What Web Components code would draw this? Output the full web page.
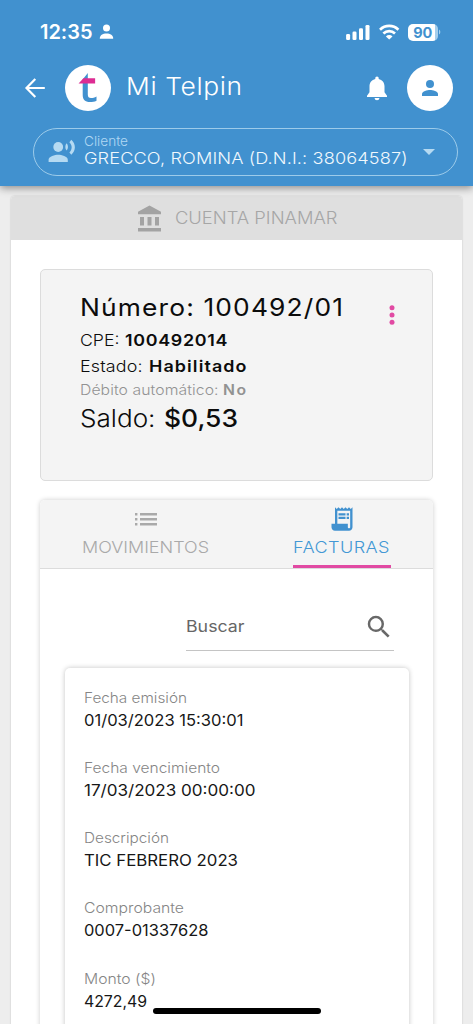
<!DOCTYPE html>
<html lang="es">
<head>
<meta charset="utf-8">
<title>Mi Telpin</title>
<style>
html,body{margin:0;height:1024px;overflow:hidden;background:#ededed}
body{font-family:Inter,"Open Sans",sans-serif;color:#111}
</style>
</head>
<body>
<telpin-app></telpin-app>
<script>
function define(name, html, setup){
  customElements.define(name, class extends HTMLElement{
    connectedCallback(){
      if(this.shadowRoot) return;
      this.attachShadow({mode:'open'}).innerHTML = html;
      if(setup) setup(this, this.shadowRoot);
    }
  });
}

/* One line of text, widened up to 10% and then tracked to the width in "w". */
define('tracked-text', `<style>
:host{display:block;white-space:pre;flex:none}
span{display:inline-block;vertical-align:top;transform-origin:0 50%}
</style><span></span>`, (el, root) => {
  const s = root.querySelector('span');
  const t = el.getAttribute('text');
  s.textContent = t;
  const w = parseFloat(el.getAttribute('w'));
  const ink = t.length > 4 ? w - 1.5 : w - .5;
  const n = s.getBoundingClientRect().width;
  const k = Math.max(1, Math.min(ink / n, 1.1));
  s.style.letterSpacing = ((ink / k - n) / (t.length - 1)).toFixed(3) + 'px';
  s.style.transform = 'scaleX(' + k.toFixed(4) + ')';
  el.style.width = w + 'px';
});

define('status-bar', `<style>
:host{display:flex;height:62px;box-sizing:border-box;padding:2px 32px 0 40px;align-items:center;color:#fff}
.time{font-size:20px;font-weight:600;line-height:24px}
.person{margin-left:5px}
.sig{margin-left:auto}
.wifi{margin-left:8px}
.bat{margin-left:8px;width:30px;height:17px;border-radius:5px;background:linear-gradient(90deg,#fff 0 27px,#a5cfec 27px);color:#4191cf;font-size:14.500px;font-weight:700;line-height:17.500px;display:flex;justify-content:center}
.cap{margin-left:1px}
</style>
<tracked-text class="time" w="54" text="12:35"></tracked-text>
<svg class="person" width="16" height="16" viewBox="0 0 16 16" fill="#fff"><circle cx="7.500" cy="4" r="3.500"/><path d="M.8 14.700c-.2-3.300 3-5.200 6.700-5.200s6.900 1.900 6.700 5.200z"/></svg>
<svg class="sig" width="25" height="17" viewBox="0 0 25 17" fill="#fff"><rect x=".1" y="10" width="4" height="6" rx="1.300"/><rect x="6.500" y="7.500" width="4" height="8.500" rx="1.300"/><rect x="13" y="4.300" width="4" height="11.700" rx="1.300"/><rect x="19.500" y="1" width="4" height="15" rx="1.300"/></svg>
<svg class="wifi" width="21" height="17" viewBox="0 0 21 17" fill="none" stroke="#fff" stroke-width="2.700"><path d="M1 5.700a13.200 13.200 0 0 1 18.400 0M4.400 9.500a8.400 8.400 0 0 1 11.600 0"/><path d="M10.200 15.500L6.900 12.400a4.700 4.700 0 0 1 6.600 0z" fill="#fff" stroke="none"/></svg>
<div class="bat"><tracked-text w="19.500" text="90"></tracked-text></div>
<svg class="cap" width="2" height="6"><path d="M0 .5a3 3 0 0 1 0 5z" fill="#a5cfec"/></svg>`);

define('app-toolbar', `<style>
:host{display:flex;height:52px;align-items:center;padding:0 20px 0 23px;color:#fff}
.disc{width:46px;height:46px;border-radius:50%;background:#fff;display:flex;align-items:center;justify-content:center}
.logo{margin-left:18px}
.title{margin-left:14.500px;font-size:24px;line-height:30px;font-weight:300;margin-top:-3px}
.bell{margin-left:auto;margin-right:16px}
</style>
<svg width="24" height="24" viewBox="0 0 24 24" fill="none" stroke="#fff" stroke-width="2.200"><path d="M21.800 12H3.800M12.300 3L3.500 12l8.800 9"/></svg>
<div class="disc logo"><svg width="46" height="46" viewBox="0 0 46 46"><path d="M17.700 14.500L22.800 8v21.500c0 2.500 1 3.500 3.200 3.500 1.900 0 3.500-.5 5.500-1.500v4.300c-2 1-4.200 1.300-6.500 1.300-5 0-7.300-2.500-7.300-7z" fill="#4191cf"/><path d="M13.600 18.400l4.800-5.200h11.700v5.200z" fill="#dd2c93"/></svg></div>
<tracked-text class="title" w="117.500" text="Mi Telpin"></tracked-text>
<svg class="bell" width="28" height="28" viewBox="0 0 28 28" fill="#fff"><path d="M14 26.200a2.500 2.500 0 0 0 2.500-2.200h-5a2.500 2.500 0 0 0 2.500 2.200z"/><path d="M14 2.500c-1 0-1.700.8-1.700 1.800v.7C8.800 5.800 6.500 8.700 6.500 12.300v6L4 21.700v1.200h20v-1.200l-2.500-3.400v-6c0-3.600-2.300-6.500-5.800-7.300v-.7c0-1-.7-1.800-1.700-1.800z"/></svg>
<div class="disc"><svg width="16" height="16" viewBox="0 0 16 16" fill="#4191cf"><circle cx="8" cy="4" r="4"/><path d="M0 16v-2c0-2.700 5.300-4 8-4s8 1.300 8 4v2z"/></svg></div>`);

define('client-select', `<style>
:host{display:flex;box-sizing:border-box;width:425.500px;height:48.500px;margin:13.500px 0 0 32.500px;border:1.300px solid #9ccbea;border-radius:25px;align-items:center;padding:0 21px 0 14px}
.txt{margin-left:8.500px;height:47px}
.l{font-size:13.300px;line-height:16px;color:#b0d8f3;margin-top:4.500px;font-weight:350}
.v{font-size:16.500px;line-height:20px;color:#f0f8fd;margin-top:-.500px;font-weight:350}
.arrow{margin-left:auto}
</style>
<svg width="28" height="26" viewBox="0 0 28 26" fill="#b5daf2"><circle cx="10.200" cy="8" r="4.900"/><path d="M.600 23v-2.300c0-3.300 6.400-5 9.600-5s9.600 1.700 9.600 5V23z"/><path d="M18.700 4.300c1.700 2.200 1.700 5 0 7.200l-.9-1.300c-.6-1.600-.6-3 0-4.600zM23.300 .8c4.800 4.300 4.700 10.800 0 15l-1.900-2.400c3-3.200 3-7.100 0-10.200z"/></svg>
<div class="txt"><tracked-text class="l" w="45.500" text="Cliente"></tracked-text><tracked-text class="v" w="325" text="GRECCO, ROMINA (D.N.I.: 38064587)"></tracked-text></div>
<svg class="arrow" width="14" height="8" viewBox="0 0 14 8"><path d="M1 1h12L7 7z" fill="#b5daf2"/></svg>`);

define('app-header', `<style>
:host{display:block;position:relative;height:185.500px;background:#4191cf;box-shadow:0 2px 8px rgba(0,0,0,.42);box-sizing:border-box}
</style><status-bar></status-bar><app-toolbar></app-toolbar><client-select></client-select>`);

define('account-header', `<style>
:host{display:flex;height:44px;background:#dfdfdf;align-items:center;padding-left:125px;color:#a6a6a6;border-radius:4px 4px 0 0}
tracked-text{margin-left:11.500px;font-size:16.700px;line-height:20px;font-weight:350}
</style><svg width="27" height="28" viewBox="0 0 27 28" fill="#a3a3a3"><path d="M13.500 1.500L2 7.800v2.400h23V7.800zM4 13h4v8.500H4zM11.500 13h4v8.500h-4zM19 13h4v8.500h-4zM2 24h23v3.500H2z"/></svg>
<tracked-text w="164" text="CUENTA PINAMAR"></tracked-text>`);

define('balance-card', `<style>
:host{display:flex;box-sizing:border-box;width:393px;height:212px;border:1.500px solid #dcdcdc;border-radius:5px;background:#f4f4f4;margin:29px 0 0 29px;justify-content:space-between;padding:22px 36px 0 39px;color:#0c0c0c}
.row{display:flex;font-size:16.300px}
.gap{margin-left:4.500px}
b,.b{font-weight:600}
.n{font-size:24px;line-height:31px}
.r{line-height:26px}
.d{font-size:14.300px;line-height:21px;color:#929292}
.s{font-size:24px;line-height:38px}
.light{font-weight:350}
svg{margin-top:11px}
</style>
<div>
<div class="row n"><tracked-text w="264.500" text="Número: 100492/01"></tracked-text></div>
<div class="row r" style="margin-top:3.500px"><tracked-text w="40" class="light" text="CPE:"></tracked-text><tracked-text class="b gap" w="104" text="100492014"></tracked-text></div>
<div class="row r"><tracked-text w="64" class="light" text="Estado:"></tracked-text><tracked-text class="b gap" w="99" text="Habilitado"></tracked-text></div>
<div class="row d"><tracked-text w="140" class="light" text="Débito automático:"></tracked-text><tracked-text class="b" style="margin-left:3px" w="23.500" text="No"></tracked-text></div>
<div class="row s"><tracked-text w="77" class="light" text="Saldo:"></tracked-text><tracked-text class="b" style="margin-left:6.500px;font-weight:500" w="75.500" text="$0,53"></tracked-text></div>
</div>
<svg width="8" height="24" viewBox="0 0 8 24" fill="#e14aa3"><circle cx="4" cy="4.800" r="2.500"/><circle cx="4" cy="12" r="2.500"/><circle cx="4" cy="19.300" r="2.500"/></svg>`);

define('tab-strip', `<style>
:host{display:flex;height:68px;background:#f4f4f4;border-bottom:1px solid #dcdcdc;border-radius:5px 5px 0 0;font-size:16.400px;line-height:20px;font-weight:350;padding:0 42px;justify-content:space-between}
.tab{display:flex;flex-direction:column;align-items:center;color:#a9a9a9;box-sizing:border-box;height:68px;padding-top:6px}
.on{color:#4398d5;border-bottom:3px solid #e14aa3}
svg{margin-bottom:3px}
</style>
<div class="tab"><svg width="28" height="28" viewBox="0 0 28 28" fill="#a9a9a9"><path d="M3 7h2.400v2.600H3zM3 12h2.400v2.600H3zM3 17h2.400v2.600H3zM8 7h17v2.600H8zM8 12h17v2.600H8zM8 17h17v2.600H8z"/></svg><tracked-text w="128.500" text="MOVIMIENTOS"></tracked-text></div>
<div class="tab on"><svg style="margin-top:-1px;margin-bottom:4px" width="28" height="28" viewBox="0 0 24 24" fill="#4191cf"><path d="M19.500 3.500L18 2l-1.500 1.500L15 2l-1.500 1.500L12 2l-1.500 1.500L9 2 7.500 3.500 6 2v14H3v3c0 1.660 1.340 3 3 3h12c1.660 0 3-1.340 3-3V2l-1.500 1.500zM19 19c0 .550-.450 1-1 1s-1-.450-1-1v-3H8V5h11v14z"/><path d="M9 7h6v2H9zM16 7h2v2h-2zM9 10h6v2H9zM16 10h2v2h-2z"/></svg><tracked-text w="98" text="FACTURAS"></tracked-text></div>`);

define('search-field', `<style>
:host{display:flex;width:208px;height:49px;margin:33px 0 0 146px;border-bottom:1.500px solid #c4c4c4;box-sizing:border-box;justify-content:space-between;font-size:16.300px;line-height:20px;color:#666;padding:14px 0 0}
tracked-text{margin-left:-.500px}
svg{margin-top:-4px}
</style><tracked-text w="60" text="Buscar"></tracked-text>
<svg width="30" height="30" viewBox="0 0 24 24" fill="#686868"><path d="M15.500 14h-.790l-.280-.270A6.470 6.470 0 0 0 16 9.500 6.500 6.500 0 1 0 9.500 16c1.610 0 3.090-.590 4.230-1.570l.270.280v.790l5 4.990L20.490 19l-4.990-5zm-6 0C7.010 14 5 11.990 5 9.500S7.010 5 9.500 5 14 7.010 14 9.500 11.990 14 9.500 14z"/></svg>`);

define('invoice-field', `<style>
:host{display:block;height:70.300px}
.l{font-size:14.300px;line-height:20px;color:#858585;font-weight:350}
.v{font-size:15.800px;line-height:22px;color:#171717;margin-top:2px}
</style><div class="l"></div><div class="v"></div>`, (el, root) => {
  const add = (sel, text, w) => {
    const t = document.createElement('tracked-text');
    t.setAttribute('text', text); t.setAttribute('w', w);
    root.querySelector(sel).append(t);
  };
  add('.l', el.getAttribute('label'), el.getAttribute('lw'));
  add('.v', el.getAttribute('value'), el.getAttribute('vw'));
});

define('invoice-card', `<style>
:host{display:block;width:344px;height:420px;margin:17px 0 0 24.500px;padding:20px 0 0 19.500px;box-sizing:border-box;border-radius:5px;background:#fff;box-shadow:0 0 5px rgba(0,0,0,.24)}
</style>
<invoice-field label="Fecha emisión" lw="104.500" value="01/03/2023 15:30:01" vw="161"></invoice-field>
<invoice-field label="Fecha vencimiento" lw="137.500" value="17/03/2023 00:00:00" vw="173"></invoice-field>
<invoice-field label="Descripción" lw="86.500" value="TIC FEBRERO 2023" vw="155.500"></invoice-field>
<invoice-field label="Comprobante" lw="101.500" value="0007-01337628" vw="126"></invoice-field>
<invoice-field label="Monto ($)" lw="73.500" value="4272,49" vw="64.500"></invoice-field>`);

define('movements-panel', `<style>
:host{display:block;width:393px;height:620px;margin:18.500px 0 0 29px;border-radius:5px;background:#fff;box-shadow:0 0 5px rgba(0,0,0,.2)}
:host::before{content:"";display:table}
</style><tab-strip></tab-strip><search-field></search-field><invoice-card></invoice-card>`);

define('account-panel', `<style>
:host{display:block;width:451px;height:840px;margin:10.500px 0 0 11px;background:#fff;border-radius:4px;box-shadow:0 0 2px rgba(0,0,0,.2)}
</style><account-header></account-header><balance-card></balance-card><movements-panel></movements-panel>`);

define('telpin-app', `<style>
:host{display:block;position:relative;height:1024px;overflow:hidden;background:#ededed}
app-header{z-index:2}
.home{position:absolute;left:152.500px;top:1008px;width:168.500px;height:6px;border-radius:3px;background:#000}
</style><app-header></app-header><account-panel></account-panel><div class="home"></div>`);
</script>
</body>
</html>
